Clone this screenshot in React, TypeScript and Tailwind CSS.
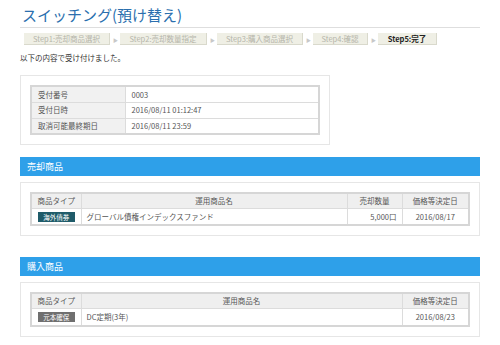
const font = { fontFamily: '"Noto Sans CJK JP", "Noto Sans", sans-serif' };

const steps = [
  { label: "Step1:売却商品選択", w: "w-[86px]" },
  { label: "Step2:売却数量指定", w: "w-[87px]" },
  { label: "Step3:購入商品選択", w: "w-[86px]" },
  { label: "Step4:確認", w: "w-[55px]" },
  { label: "Step5:完了", w: "w-[59px]", active: true },
];

const receipt = [
  { k: "受付番号", v: "0003" },
  { k: "受付日時", v: "2016/08/11 01:12:47" },
  { k: "取消可能最終期日", v: "2016/08/11 23:59" },
];

function SectionHead({ title }: { title: string }) {
  return (
    <div className="h-[19px] bg-[#2ea0e9] pl-[7px] text-[9px] leading-[19px] text-white">{title}</div>
  );
}

export default function App() {
  return (
    <div className="h-[345px] w-[500px] overflow-hidden bg-white px-5 pt-[4px] text-[#444]" style={font}>
      <h1 className="border-b border-[#dedede] pb-[1px] pl-[2px] text-[15px] leading-[22px] text-[#2b6fae]">
        スイッチング(預け替え)
      </h1>

      <div className="mt-[5px] flex items-center pl-[4px]">
        {steps.map((s, i) => (
          <div key={s.label} className="flex items-center">
            {i > 0 && (
              <span className="mx-[3px] w-[4px] text-center text-[5px] leading-none text-[#c8c8c8]">▶</span>
            )}
            <div
              className={`${s.w} h-[12px] border-r border-b border-[#d9d9cc] bg-[#efefe5] text-center text-[7.5px] leading-[12px] ${
                s.active ? "font-bold text-[#222]" : "text-[#b5b5aa]"
              }`}
            >
              {s.label}
            </div>
          </div>
        ))}
      </div>

      <p className="mt-[8px] text-[7.5px] leading-[10px] text-[#333]">以下の内容で受け付けました。</p>

      <div className="mt-[12px] w-[310px] border border-[#e6e6e6] p-[9px]">
        <table className="w-full border-collapse border-2 border-[#d6d6d6] text-[7.5px] text-[#555]">
          <tbody>
            {receipt.map((r) => (
              <tr key={r.k} className="h-[16px]">
                <td className="w-[94px] border border-[#dcdcdc] bg-[#f1f1f1] px-[6px]">{r.k}</td>
                <td className="border border-[#dcdcdc] px-[6px]">{r.v}</td>
              </tr>
            ))}
          </tbody>
        </table>
      </div>

      <div className="mt-[12px]">
        <SectionHead title="売却商品" />
        <div className="mt-[6px] border border-[#e6e6e6] p-[9px]">
          <table className="w-full border-collapse border-2 border-[#d6d6d6] text-[7.5px] text-[#555]">
            <thead>
              <tr className="h-[15px] bg-[#efefef]">
                <th className="w-[50px] border border-[#dcdcdc] font-normal">商品タイプ</th>
                <th className="border border-[#dcdcdc] font-normal">運用商品名</th>
                <th className="w-[55px] border border-[#dcdcdc] font-normal">売却数量</th>
                <th className="w-[67px] border border-[#dcdcdc] font-normal">価格等決定日</th>
              </tr>
            </thead>
            <tbody>
              <tr className="h-[17px]">
                <td className="border border-[#dcdcdc] text-center">
                  <span className="inline-block w-[37px] bg-[#1f5b69] text-[6.5px] leading-[10px] text-white">海外債券</span>
                </td>
                <td className="border border-[#dcdcdc] px-[5px]">グローバル債権インデックスファンド</td>
                <td className="border border-[#dcdcdc] px-[5px] text-right">5,000口</td>
                <td className="border border-[#dcdcdc] text-center">2016/08/17</td>
              </tr>
            </tbody>
          </table>
        </div>
      </div>

      <div className="mt-[21px]">
        <SectionHead title="購入商品" />
        <div className="mt-[6px] border border-[#e6e6e6] p-[9px]">
          <table className="w-full border-collapse border-2 border-[#d6d6d6] text-[7.5px] text-[#555]">
            <thead>
              <tr className="h-[15px] bg-[#efefef]">
                <th className="w-[50px] border border-[#dcdcdc] font-normal">商品タイプ</th>
                <th className="border border-[#dcdcdc] font-normal">運用商品名</th>
                <th className="w-[67px] border border-[#dcdcdc] font-normal">価格等決定日</th>
              </tr>
            </thead>
            <tbody>
              <tr className="h-[18px]">
                <td className="border border-[#dcdcdc] text-center">
                  <span className="inline-block w-[37px] bg-[#6f6f6f] text-[6.5px] leading-[10px] text-white">元本確保</span>
                </td>
                <td className="border border-[#dcdcdc] px-[5px]">DC定期(3年)</td>
                <td className="border border-[#dcdcdc] text-center">2016/08/23</td>
              </tr>
            </tbody>
          </table>
        </div>
      </div>
    </div>
  );
}
